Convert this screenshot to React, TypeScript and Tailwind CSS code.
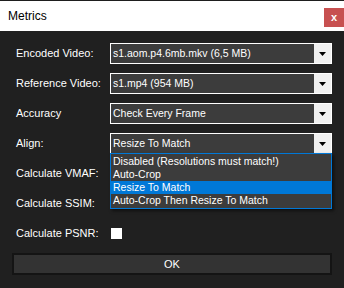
import React from 'react';

const font = { fontFamily: '"Liberation Sans", Arial, sans-serif' };

function Arrow() {
  return (
    <svg width="7" height="4" viewBox="0 0 7 4" className="block">
      <path d="M0 0H7L3.5 4Z" fill="#000" />
    </svg>
  );
}

function Combo({ value }: { value: string }) {
  return (
    <div className="flex h-[21px] w-[222px] border border-white bg-[#3c3c3c]">
      <div className="flex flex-1 items-center pl-[2px] text-[10.5px] leading-none text-white whitespace-nowrap overflow-hidden">
        {value}
      </div>
      <div className="flex w-[17px] items-center justify-center bg-[#f0f0f0]">
        <Arrow />
      </div>
    </div>
  );
}

function Row({ label, children }: { label: string; children: React.ReactNode }) {
  return (
    <div className="flex h-[21px] items-center">
      <div className="w-[94px] text-[11px] leading-none text-white whitespace-nowrap">{label}</div>
      {children}
    </div>
  );
}

function Checkbox() {
  return <div className="ml-px h-[11px] w-[11px] bg-white" />;
}

const alignOptions = [
  'Disabled (Resolutions must match!)',
  'Auto-Crop',
  'Resize To Match',
  'Auto-Crop Then Resize To Match',
];

export default function App() {
  return (
    <div className="h-[288px] w-[344px] overflow-hidden bg-[#202020]" style={font}>
      <div className="flex h-[31px] items-start border-t border-[#1e1e1e] bg-white">
        <div className="flex h-[30px] flex-1 items-center pl-[8px] text-[12px] text-black">Metrics</div>
        <div className="mt-[7px] flex h-[19px] w-[20px] items-center justify-center bg-[#c75050] text-[11px] font-bold leading-none text-white">
          x
        </div>
      </div>

      <div className="flex flex-col gap-[9px] pl-[16px] pr-[12px] pt-[12px]">
        <Row label="Encoded Video:">
          <Combo value="s1.aom.p4.6mb.mkv (6,5 MB)" />
        </Row>
        <Row label="Reference Video:">
          <Combo value="s1.mp4 (954 MB)" />
        </Row>
        <Row label="Accuracy">
          <Combo value="Check Every Frame" />
        </Row>
        <Row label="Align:">
          <div className="relative">
            <Combo value="Resize To Match" />
            <div className="absolute left-0 top-[20px] z-10 w-[222px] border border-[#0078d7] bg-[#3c3c3c] py-px shadow-[2px_2px_3px_rgba(0,0,0,0.5)]">
              {alignOptions.map((o) => (
                <div
                  key={o}
                  className={`flex h-[13px] items-center pl-[2px] text-[10.5px] leading-none text-white whitespace-nowrap ${
                    o === 'Resize To Match' ? 'bg-[#0078d7]' : ''
                  }`}
                >
                  {o}
                </div>
              ))}
            </div>
          </div>
        </Row>
        <Row label="Calculate VMAF:">
          <Checkbox />
        </Row>
        <Row label="Calculate SSIM:">
          <Checkbox />
        </Row>
        <Row label="Calculate PSNR:">
          <Checkbox />
        </Row>
        <div className="-ml-[4px] flex h-[22px] w-[320px] items-center justify-center border-2 border-[#141414] bg-[#333333] text-[11px] text-white">
          OK
        </div>
      </div>
    </div>
  );
}
